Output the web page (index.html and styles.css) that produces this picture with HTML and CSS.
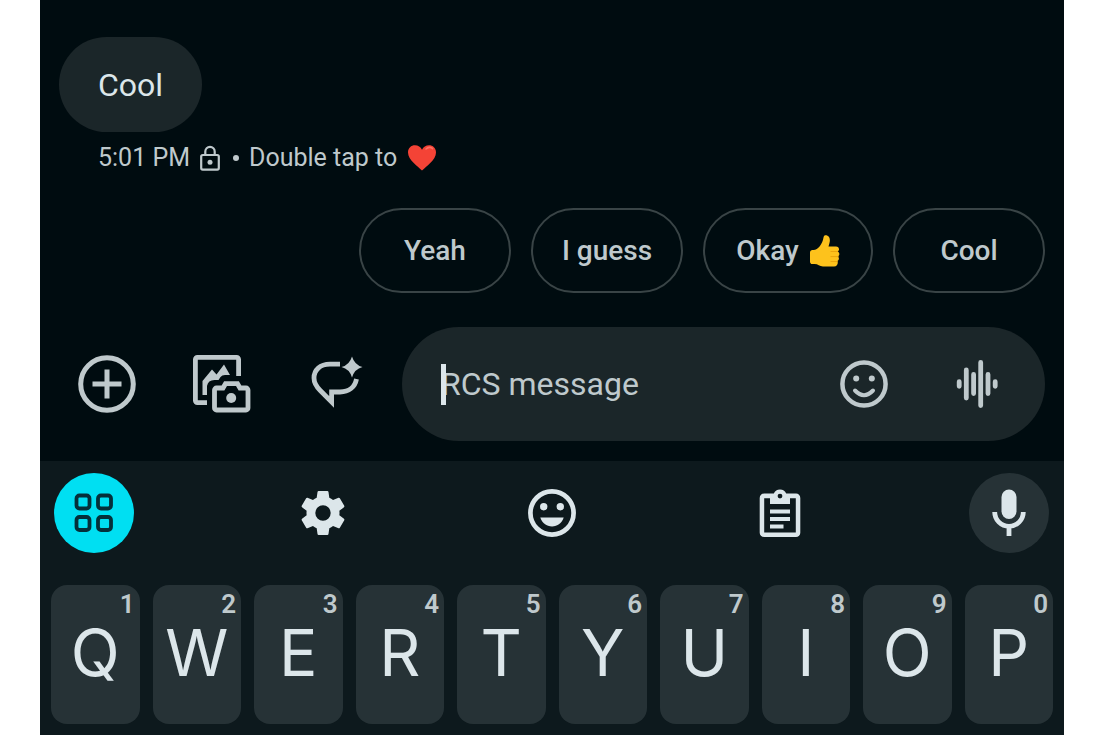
FILE: index.html
```html
<!DOCTYPE html>
<html lang="en">
<head>
<meta charset="utf-8">
<title>Messages</title>
<link rel="stylesheet" href="styles.css">
</head>
<body>
<div class="app">
  <main class="chat">
    <div class="bubble">Cool</div>
    <div class="meta">
      <span>5:01 PM</span>
      <svg class="lock" viewBox="0 0 20 26" aria-hidden="true"><rect x="1.2" y="10" width="17.6" height="14.6" rx="1.5" fill="none" stroke="currentColor" stroke-width="2.2"/><path d="M5.3 10V6.5a4.7 4.7 0 0 1 9.4 0V10" fill="none" stroke="currentColor" stroke-width="2.2"/><circle cx="10" cy="17.3" r="2.5" fill="currentColor"/></svg>
      <span class="dot"></span>
      <span>Double tap to</span>
      <svg class="heart" viewBox="0 0 28 26" aria-hidden="true"><path d="M14 25.500C10 21.500 0 15 0 7.500 0 3 3.200.300 7 .300c3.200 0 5.600 1.700 7 4.400 1.400-2.700 3.800-4.400 7-4.400 3.800 0 7 2.700 7 7.200C28 15 18 21.500 14 25.500z" fill="#f44336"/><path d="M18 4c2-2 5-2.200 6.500-.4" fill="none" stroke="#ff7062" stroke-width="1.600" stroke-linecap="round"/></svg>
    </div>
    <div class="replies">
      <button class="chip">Yeah</button>
      <button class="chip">I guess</button>
      <button class="chip chip-wide">Okay
        <svg class="thumb" viewBox="0 0 30 32" aria-hidden="true"><path d="M0 17.500C0 15.500 1.500 15 3.500 15 8 15 12.500 9 13.500 2.500 13.800.500 15 0 16.500.300c3.200.800 4 4 2.900 8l-.9 3.200H26c3.200 0 4 3.500 1.700 4.900 2.300 1.300 2.100 4 .3 5 1.500 1.400 1.100 3.800-.6 4.700 1 1.700.100 5.400-3.400 5.400H13c-3.500 0-5-2.400-8.500-2.400H2.500C.700 29.100 0 28 0 26.500z" fill="#fdc21c"/><path d="M20.500 16.500H28M20.500 21.600h8M20.500 26.500h7" stroke="#eba50c" stroke-width="1" fill="none"/></svg>
      </button>
      <button class="chip">Cool</button>
    </div>
  </main>

  <form class="compose">
    <button type="button" class="tool" aria-label="Add">
      <svg viewBox="0 0 58 58" fill="none" stroke="currentColor" stroke-width="5"><circle cx="29" cy="29" r="26.300"/><path d="M29 14.500v29M14.500 29h29"/></svg>
    </button>
    <button type="button" class="tool" aria-label="Gallery and camera">
      <svg viewBox="0 0 58 58" fill="none" stroke="currentColor" stroke-width="4.800"><path d="M45.600 21V4.400a2 2 0 0 0-2-2H4.400a2 2 0 0 0-2 2v41.200a2 2 0 0 0 2 2H14"/><path d="M9.500 40V26L19 14.500l4.500 5L31 9.500 37 20H32q-3 0-4.500 2l-2 3h-4q-6.500 0-7.500 6v9z" fill="currentColor" stroke="none"/><path d="M23.500 33H30l2.500-4.300h12L47 33h6a2 2 0 0 1 2 2v18a2 2 0 0 1-2 2H23.500a2 2 0 0 1-2-2V35a2 2 0 0 1 2-2z"/><circle cx="38.200" cy="43" r="5" fill="currentColor" stroke="none"/></svg>
    </button>
    <button type="button" class="tool" aria-label="Magic compose">
      <svg viewBox="-2 -2 58 58" fill="none" stroke="currentColor" stroke-width="4.800"><path d="M30 7.200H20C10 7.200 4 13 4 21c0 5 2.600 8.800 6 12.200L21.600 45V35H30c9 0 15-5 16.500-13"/><path d="M42-.5q2.500 8.500 10.500 10.500Q44.500 12 42 20.500 39.500 12 31.500 10 39.500 8 42-.5z" fill="currentColor" stroke="none"/></svg>
    </button>
    <div class="field">
      <span class="caret"></span>
      <input class="entry" type="text" placeholder="RCS message" aria-label="RCS message">
      <button type="button" class="inner" aria-label="Emoji">
        <svg viewBox="0 0 48 48" fill="none" stroke="currentColor" stroke-width="4.500"><circle cx="24" cy="24" r="21.600"/><circle cx="16.200" cy="18.500" r="3" fill="currentColor" stroke="none"/><circle cx="31.800" cy="18.500" r="3" fill="currentColor" stroke="none"/><path d="M15 30.500q9 9.500 18 0" stroke-width="4" stroke-linecap="round"/></svg>
      </button>
      <button type="button" class="inner" aria-label="Record audio">
        <svg viewBox="0 0 48 48" fill="none" stroke="currentColor" stroke-width="4.800" stroke-linecap="round"><path d="M6.200 21.700v4.600M13.300 10v28M20.600 14.500v19M27.700 2.500v43M35 14.500v19M42.200 21.700v4.600"/></svg>
      </button>
    </div>
  </form>

  <section class="keyboard" aria-label="Keyboard">
    <div class="toolbar">
      <button class="round round-accent" aria-label="Menu">
        <svg class="i40" viewBox="0 0 40 40" fill="none" stroke="currentColor" stroke-width="3.800"><rect x="2.500" y="2.500" width="13" height="13" rx="3"/><rect x="24" y="2.500" width="13" height="13" rx="3"/><rect x="2.500" y="24" width="13" height="13" rx="3"/><rect x="24" y="24" width="13" height="13" rx="3"/></svg>
      </button>
      <button class="round" aria-label="Settings">
        <svg class="i44" viewBox="2 2 20 20" fill="currentColor"><path d="M19.430 12.980c.04-.32.070-.64.070-.98s-.03-.66-.07-.98l2.110-1.650c.19-.15.240-.42.120-.64l-2-3.460c-.12-.22-.39-.3-.61-.22l-2.490 1c-.52-.4-1.080-.73-1.690-.98l-.38-2.650C14.460 2.180 14.250 2 14 2h-4c-.25 0-.46.180-.49.420l-.38 2.650c-.61.250-1.170.590-1.690.980l-2.490-1c-.23-.09-.49 0-.61.220l-2 3.460c-.13.220-.07.490.120.640l2.110 1.650c-.04.320-.07.650-.07.980s.03.660.07.980l-2.110 1.650c-.19.150-.24.420-.12.640l2 3.460c.12.220.39.300.61.220l2.490-1c.52.400 1.080.730 1.690.980l.38 2.650c.03.240.24.420.49.420h4c.25 0 .46-.18.490-.42l.38-2.650c.61-.25 1.170-.59 1.690-.98l2.490 1c.23.090.49 0 .61-.22l2-3.460c.12-.22.070-.49-.12-.64zM12 15.500a3.500 3.500 0 1 1 0-7 3.500 3.500 0 0 1 0 7z"/></svg>
      </button>
      <button class="round" aria-label="Emoji keyboard">
        <svg class="i48" viewBox="0 0 48 48" fill="currentColor"><circle cx="24" cy="24" r="21.600" fill="none" stroke="currentColor" stroke-width="4.700"/><circle cx="15.700" cy="17.700" r="3.700"/><circle cx="32.300" cy="17.700" r="3.700"/><path d="M12.300 28.500h23.400C34 34 29.500 37.500 24 37.500S14 34 12.300 28.500z"/></svg>
      </button>
      <button class="round" aria-label="Clipboard">
        <svg class="i48" viewBox="0 0 48 48" fill="currentColor"><path fill-rule="evenodd" d="M8 4.600h9.800a6.800 6.800 0 0 1 12.400 0H40a4.300 4.300 0 0 1 4.300 4.300v34.800A4.300 4.300 0 0 1 40 48H8a4.300 4.300 0 0 1-4.300-4.300V8.900A4.300 4.300 0 0 1 8 4.600zM8.200 9.200v34.200h31.600V9.200H34v5.700H14V9.200zM24 4.700a2.400 2.400 0 1 0 0 4.800 2.400 2.400 0 0 0 0-4.800z"/><path d="M14 20.500h20v4H14zM14 28h20v4H14zM14 35.500h13.500v4H14z"/></svg>
      </button>
      <button class="round round-dim" aria-label="Voice typing">
        <svg class="i48" viewBox="0 0 48 48"><rect x="16.500" y="0.500" width="15" height="29.500" rx="7.500" fill="currentColor"/><path d="M9.700 23a14.300 14.300 0 0 0 28.600 0M24 37v10" fill="none" stroke="currentColor" stroke-width="4.800"/></svg>
      </button>
    </div>
    <div class="keys">
      <button class="key"><span class="num">1</span>Q</button>
      <button class="key"><span class="num">2</span>W</button>
      <button class="key"><span class="num">3</span>E</button>
      <button class="key"><span class="num">4</span>R</button>
      <button class="key"><span class="num">5</span>T</button>
      <button class="key"><span class="num">6</span>Y</button>
      <button class="key"><span class="num">7</span>U</button>
      <button class="key"><span class="num">8</span>I</button>
      <button class="key"><span class="num">9</span>O</button>
      <button class="key"><span class="num">0</span>P</button>
    </div>
  </section>
</div>
</body>
</html>
```
FILE: styles.css
```css
* { box-sizing: border-box; }
body {
  margin: 0;
  background: #fff;
  font-family: Roboto, "Liberation Sans", sans-serif;
}
button {
  margin: 0;
  padding: 0;
  border: 0;
  background: none;
  color: inherit;
  font-family: inherit;
  display: flex;
  align-items: center;
  justify-content: center;
}
svg { display: block; flex: none; }
.app {
  margin: 0 40px;
  min-height: 100vh;
  display: flex;
  flex-direction: column;
  background: #000c10;
  color: #bfc9cc;
}
.chat {
  padding: 37px 19px 0;
  display: flex;
  flex-direction: column;
}
.bubble {
  align-self: flex-start;
  padding: 28px 39px 27px;
  border-radius: 48px;
  background: #1b2629;
  color: #dce6ea;
  font-size: 32px;
  line-height: 40px;
}
.meta {
  display: flex;
  align-items: center;
  padding: 10px 39px 0;
  font-size: 25px;
  line-height: 32px;
}
.lock { width: 20px; height: 26px; margin-left: 10px; }
.dot {
  width: 6px;
  height: 6px;
  margin: 0 10px 0 13px;
  border-radius: 50%;
  background: currentColor;
}
.heart { width: 28px; height: 26px; margin-left: 11px; }
.replies {
  display: flex;
  justify-content: flex-end;
  gap: 20px;
  padding-top: 34px;
}
.chip {
  width: 152px;
  height: 85px;
  border: 2px solid #394446;
  border-radius: 43px;
  font-size: 28px;
  font-weight: 500;
}
.chip-wide { width: 170px; gap: 11px; }
.thumb { width: 30px; height: 32px; }
.compose {
  display: flex;
  align-items: center;
  padding: 34px 19px 20px 38px;
}
.tool { width: 58px; height: 58px; margin-right: 57px; }
.tool:nth-of-type(3) { margin-right: 36px; }
.tool svg { width: 58px; height: 58px; }
.field {
  position: relative;
  flex: 1;
  min-width: 0;
  height: 114px;
  display: flex;
  align-items: center;
  padding: 0 44px 0 39px;
  border-radius: 57px;
  background: #1b2629;
}
.entry {
  flex: 1;
  min-width: 0;
  padding: 0;
  border: 0;
  outline: 0;
  background: none;
  color: #dce6ea;
  font-family: inherit;
  font-size: 32px;
  line-height: 40px;
}
.entry::placeholder { color: #bfc9cc; opacity: 1; }
.caret {
  position: absolute;
  left: 39px;
  top: 37px;
  width: 5px;
  height: 41px;
  background: #dce6ea;
}
.inner { width: 48px; height: 48px; }
.inner + .inner { margin-left: 65px; }
.inner svg { width: 48px; height: 48px; }
.keyboard {
  flex: 1;
  padding: 12px 11px 11px;
  background: #0d191d;
  color: #dce6ea;
}
.toolbar {
  display: flex;
  justify-content: space-between;
  padding: 0 4px 0 3px;
}
.round { width: 80px; height: 80px; border-radius: 50%; }
.round-accent { background: #00dff2; color: #04303a; }
.round-dim { background: #263236; }
.i40 { width: 40px; height: 40px; }
.i44 { width: 44px; height: 44px; }
.i48 { width: 48px; height: 48px; }
.keys {
  display: grid;
  grid-template-columns: repeat(10, 1fr);
  gap: 13px;
  padding-top: 32px;
}
.key {
  position: relative;
  height: 139px;
  padding-bottom: 4px;
  border-radius: 16px;
  background: #263236;
  font-family: Inter, Roboto, sans-serif;
  font-size: 64px;
  line-height: 1;
}
.num {
  position: absolute;
  top: 5px;
  right: 5px;
  color: #bfc9cc;
  font-family: Roboto, sans-serif;
  font-size: 26px;
  font-weight: 600;
  line-height: 28px;
}
```
